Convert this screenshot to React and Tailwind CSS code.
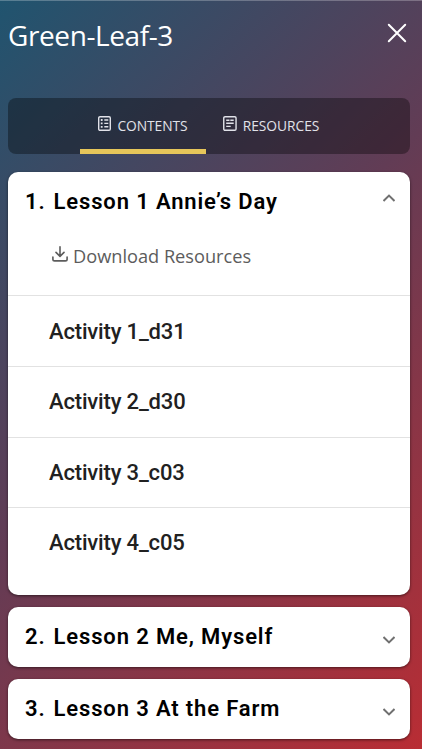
import React from 'react';

const lessons = [
    {
        id: 1,
        title: 'Lesson 1 Annie’s Day',
        open: true,
        activities: ['Activity 1_d31', 'Activity 2_d30', 'Activity 3_c03', 'Activity 4_c05'],
    },
    { id: 2, title: 'Lesson 2 Me, Myself', open: false, activities: [] },
    { id: 3, title: 'Lesson 3 At the Farm', open: false, activities: [] },
];

function CloseIcon() {
    return (
        <svg className="h-5 w-5" viewBox="0 0 20 20" fill="none" stroke="currentColor" strokeWidth="2" strokeLinecap="round">
            <path d="M1.8 1.8l16.4 16.4M18.2 1.8L1.8 18.2" />
        </svg>
    );
}

function ContentsIcon() {
    return (
        <svg className="h-[15px] w-[13px]" viewBox="0 0 13 15" fill="none" stroke="currentColor">
            <rect x="0.7" y="0.7" width="11.6" height="13.6" rx="1.3" strokeWidth="1.4" />
            <path d="M2.8 4h1.8M2.8 7.4h1.8M2.8 10.8h1.8" strokeWidth="1.8" />
            <path d="M6.3 4h4M6.3 7.4h4M6.3 10.8h4" strokeWidth="1.4" />
        </svg>
    );
}

function ResourcesIcon() {
    return (
        <svg className="h-[15px] w-[14px]" viewBox="0 0 14 15" fill="none" stroke="currentColor" strokeWidth="1.4">
            <rect x="0.75" y="0.7" width="12.3" height="13.6" rx="1.3" />
            <path d="M3.2 4.2h3.3M7.3 4.2h3.4M3.2 7.3h7.5M3.2 10.4h4.5" />
        </svg>
    );
}

function DownloadIcon() {
    return (
        <svg className="h-4 w-4" viewBox="0 0 16 16" fill="none" stroke="currentColor" strokeWidth="1.6" strokeLinecap="round" strokeLinejoin="round">
            <path d="M8 0.8v9.4M4 6.4L8 10.4l4-4" />
            <path d="M0.9 11v2.2c0 1 .7 1.7 1.7 1.7h10.8c1 0 1.7-.7 1.7-1.7V11" />
        </svg>
    );
}

function Chevron({ open }) {
    return (
        <svg className="h-2 w-3" viewBox="0 0 12 8" fill="none" stroke="#707070" strokeWidth="2">
            <path d={open ? 'M0.5 7L6 1.6L11.5 7' : 'M0.5 1L6 6.4L11.5 1'} />
        </svg>
    );
}

function Tab({ icon, label, active = false }) {
    return (
        <button
            className={`flex h-full w-[126px] justify-center gap-[6px] border-b-[5px] pt-[18px] ${
                active ? 'border-[#e6c65a]' : 'border-transparent'
            }`}
        >
            {icon}
            <span className="text-[13.8px] leading-[20px] tracking-[-0.05px]">{label}</span>
        </button>
    );
}

function LessonCard({ lesson }) {
    return (
        <section className="rounded-[10px] bg-white shadow-[0_1px_3px_rgba(0,0,0,0.55)]">
            <div className="flex h-[60px] items-center justify-between pl-[17px] pr-[15px] font-['Roboto',sans-serif] text-black">
                <h2 className="flex gap-2 pb-px text-[22px] font-semibold tracking-[0.86px]">
                    <span>{lesson.id}.</span>
                    <span>{lesson.title}</span>
                </h2>
                <div className={lesson.open ? 'pb-[7px]' : 'pt-[7px]'}>
                    <Chevron open={lesson.open} />
                </div>
            </div>
            {lesson.open && (
                <>
                    <div className="flex h-[63.6px] gap-[5px] pl-[44px] pt-[12px] text-[#5c5c5c]">
                        <div className="pt-[2px]">
                            <DownloadIcon />
                        </div>
                        <span className="text-[18.2px] leading-[25px]">Download Resources</span>
                    </div>
                    <ul className="pb-[17px] font-['Roboto',sans-serif] text-[22px] font-medium tracking-[-0.17px] text-[#212121]">
                        {lesson.activities.map((activity) => (
                            <li key={activity} className="flex h-[70.6px] items-center border-t border-[#e2e2e2] pl-[41px]">
                                {activity}
                            </li>
                        ))}
                    </ul>
                </>
            )}
        </section>
    );
}

export default function App() {
    return (
        <div className="h-[750px] overflow-hidden bg-white font-['Open_Sans','Noto_Sans',sans-serif]">
            <div className="h-[749px] border-t border-white/25 bg-[linear-gradient(135deg,#20546f_0%,#623c55_47%,#b92d34_100%)] bg-origin-border px-2">
                <header className="flex h-[97px] justify-between pr-[7px] text-white">
                    <h1 className="pt-[15px] text-[28px] font-[370] leading-[38px] tracking-[-0.4px]">Green-Leaf-3</h1>
                    <button className="h-5 pt-[22px]">
                        <CloseIcon />
                    </button>
                </header>
                <div className="mr-1">
                    <nav className="flex h-14 justify-center gap-[2px] rounded-lg bg-black/35 pr-1 text-[#e1e2e9]">
                        <Tab icon={<ContentsIcon />} label="CONTENTS" active />
                        <Tab icon={<ResourcesIcon />} label="RESOURCES" />
                    </nav>
                    <main className="mt-[17.8px] flex flex-col gap-3">
                        {lessons.map((lesson) => (
                            <LessonCard key={lesson.id} lesson={lesson} />
                        ))}
                    </main>
                </div>
            </div>
        </div>
    );
}
